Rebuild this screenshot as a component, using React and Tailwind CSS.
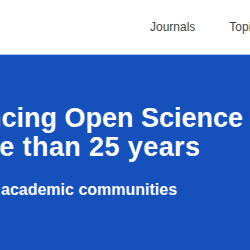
export default function App() {
  return (
    <div className="w-[250px] h-[250px] overflow-hidden bg-[#1651bb]" style={{ fontFamily: '"Liberation Sans", Arial, sans-serif' }}>
      <header className="h-[54px] bg-white flex items-start pt-[18px] pl-[150px] gap-[34px] whitespace-nowrap text-[12px] text-[#444]">
        <span>Journals</span>
        <span>Topics</span>
      </header>
      <div className="h-px bg-[#a9c0ea]" />
      <div className="pt-[49px] text-white font-bold whitespace-nowrap">
        <div className="text-[27px] leading-[29px] -ml-[81px]">Advancing Open Science</div>
        <div className="text-[27px] leading-[29px] -ml-[98px] tracking-[0.4px]">for more than 25 years</div>
        <div className="text-[16px] leading-[20px] mt-[18px] ml-[1px]">academic communities</div>
      </div>
    </div>
  );
}
